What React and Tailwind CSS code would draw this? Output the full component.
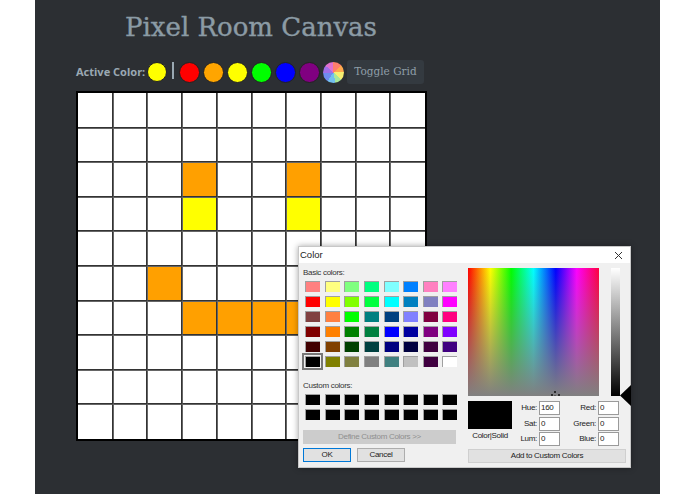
const sans = 'font-["Noto_Sans",sans-serif]';
const ui = 'font-["Liberation_Sans",Arial,sans-serif]';
const small = 'text-[8px] tracking-[-0.3px]';

const palette = [
  { name: 'red', cls: 'bg-[#ff0000]' },
  { name: 'orange', cls: 'bg-[#ffa500]' },
  { name: 'yellow', cls: 'bg-[#ffff00]' },
  { name: 'green', cls: 'bg-[#00ff00]' },
  { name: 'blue', cls: 'bg-[#0000ff]' },
  { name: 'purple', cls: 'bg-[#800080]' },
];

const painted = {
  '2-3': 'bg-[#ffa000]',
  '2-6': 'bg-[#ffa000]',
  '3-3': 'bg-[#ffff00]',
  '3-6': 'bg-[#ffff00]',
  '5-2': 'bg-[#ffa000]',
  '6-3': 'bg-[#ffa000]',
  '6-4': 'bg-[#ffa000]',
  '6-5': 'bg-[#ffa000]',
  '6-6': 'bg-[#ffa000]',
};

const basicColors = [
  '#ff8080', '#ffff80', '#80ff80', '#00ff80', '#80ffff', '#0080ff', '#ff80c0', '#ff80ff',
  '#ff0000', '#ffff00', '#80ff00', '#00ff40', '#00ffff', '#0080c0', '#8080c0', '#ff00ff',
  '#804040', '#ff8040', '#00ff00', '#008080', '#004080', '#8080ff', '#800040', '#ff0080',
  '#800000', '#ff8000', '#008000', '#008040', '#0000ff', '#0000a0', '#800080', '#8000ff',
  '#400000', '#804000', '#004000', '#004040', '#000080', '#000040', '#400040', '#400080',
  '#000000', '#808000', '#808040', '#808080', '#408080', '#c0c0c0', '#400040', '#ffffff',
];

function Swatch({ color, selected }) {
  return (
    <div className={`w-[15px] ${selected ? 'outline-2 outline-[#777] outline-offset-1' : ''}`}>
      <svg width="15" height="11" className="block border-t border-l border-[#a0a0a0]">
        <rect width="15" height="11" fill={color} />
      </svg>
    </div>
  );
}

function Field({ label, value }) {
  return (
    <div className="flex items-center justify-end gap-[2px]">
      <span className={`${small} shrink-0 text-[#222]`}>{label}</span>
      <div className={`${small} shrink-0 w-[21px] h-[14px] bg-white border border-[#9a9a9a] pl-[1px] leading-[12px] text-[#222]`}>
        {value}
      </div>
    </div>
  );
}

function ColorDialog() {
  return (
    <div className={`absolute left-[298px] top-[246px] w-[333px] h-[222px] bg-[#f0f0f0] border border-[#c8c8c8] shadow-[0_0_6px_rgba(0,0,0,0.35)] ${ui}`}>
      <div className="h-[16px] bg-white flex items-center justify-between pl-[1px] pr-[7px] text-[9.5px] text-[#222]">
        <span>Color</span>
        <svg width="9" height="9" viewBox="0 0 9 9" className="stroke-[#333]">
          <path d="M1 1l7 7M8 1l-7 7" strokeWidth="1" />
        </svg>
      </div>
      <div className="flex pl-[4px] pt-[5px] gap-[12px]">
        <div className="w-[153px]">
          <p className={`${small} leading-[10px] text-[#333]`}>Basic colors:</p>
          <div className="grid grid-cols-8 gap-y-[4px] pl-[2px] mt-[3px] w-[159px]">
            {basicColors.map((c, i) => (
              <Swatch key={i} color={c} selected={i === 40} />
            ))}
          </div>
          <p className={`${small} leading-[10px] text-[#333] mt-[14px]`}>Custom colors:</p>
          <div className="grid grid-cols-8 gap-y-[4px] pl-[2px] mt-[3px] w-[159px]">
            {Array.from({ length: 16 }, (_, i) => (
              <Swatch key={i} color="#000000" />
            ))}
          </div>
          <div className={`${small} mt-[10px] h-[14px] bg-[#cccccc] leading-[14px] text-center text-[#8f8f8f]`}>
            Define Custom Colors &gt;&gt;
          </div>
          <div className={`${small} flex gap-[6px] mt-[4px] leading-[12px] text-center text-[#222]`}>
            <div className="w-[48px] h-[14px] bg-[#e1e1e1] border border-[#0078d7]">OK</div>
            <div className="w-[48px] h-[14px] bg-[#e1e1e1] border border-[#adadad]">Cancel</div>
          </div>
        </div>
        <div className="w-[158px] relative">
          <div className="flex gap-[12px] items-start">
            <svg width="131" height="128" className="block">
              <defs>
                <linearGradient id="hue">
                  <stop offset="0" stopColor="#ff0000" />
                  <stop offset="0.17" stopColor="#ffff00" />
                  <stop offset="0.33" stopColor="#00ff00" />
                  <stop offset="0.5" stopColor="#00ffff" />
                  <stop offset="0.67" stopColor="#0000ff" />
                  <stop offset="0.83" stopColor="#ff00ff" />
                  <stop offset="1" stopColor="#ff0040" />
                </linearGradient>
                <linearGradient id="sat" x2="0" y2="1">
                  <stop offset="0" stopColor="#808080" stopOpacity="0" />
                  <stop offset="1" stopColor="#808080" stopOpacity="1" />
                </linearGradient>
                <linearGradient id="lum" x2="0" y2="1">
                  <stop offset="0" stopColor="#ffffff" />
                  <stop offset="1" stopColor="#000000" />
                </linearGradient>
              </defs>
              <rect width="131" height="128" fill="url(#hue)" />
              <rect width="131" height="128" fill="url(#sat)" />
              <path d="M87 123v2M87 127.5v.5M83 127h2M90 127h2" stroke="#111" strokeWidth="1.5" />
            </svg>
            <svg width="9" height="128" className="block">
              <rect width="9" height="128" fill="url(#lum)" />
            </svg>
          </div>
          <svg width="11" height="21" viewBox="0 0 11 21" className="absolute left-[152px] top-[117px]">
            <path d="M0 10.5L11 0v21z" fill="#000" />
          </svg>
          <div className="flex mt-[5px]">
            <div className="w-[60px]">
              <div className="w-[44px] h-[28px] bg-black" />
              <p className={`${small} leading-[10px] mt-[2px] w-[44px] text-center text-[#222] whitespace-nowrap`}>Color|Solid</p>
            </div>
            <div className="w-[32px] flex flex-col gap-[1.5px]">
              <Field label="Hue:" value="160" />
              <Field label="Sat:" value="0" />
              <Field label="Lum:" value="0" />
            </div>
            <div className="w-[59px] flex flex-col gap-[1.5px]">
              <Field label="Red:" value="0" />
              <Field label="Green:" value="0" />
              <Field label="Blue:" value="0" />
            </div>
          </div>
          <div className={`${small} mt-[3px] h-[14px] w-[158px] bg-[#e1e1e1] border border-[#cfcfcf] leading-[12px] text-center text-[#222]`}>
            Add to Custom Colors
          </div>
        </div>
      </div>
    </div>
  );
}

export default function App() {
  return (
    <div className="relative w-[695px] h-[494px] bg-white overflow-hidden">
      <div className="ml-[35px] w-[625px] h-[494px] bg-[#2c2f33] pl-[41px]">
        <h1 className="w-[350px] pt-[9px] text-center text-[26px] leading-[36px] text-[#8b9ba5] [-webkit-text-stroke:0.4px_#8b9ba5] font-['DejaVu_Serif',serif]">
          Pixel Room Canvas
        </h1>
        <div className="flex items-center mt-[15px] h-[24px]">
          <span className={`text-[11px] font-bold text-[#9aa8b2] whitespace-nowrap w-[71px] ${sans}`}>Active Color:</span>
          <div className="w-[20px] h-[20px] rounded-full bg-[#ffff00] border border-[#222]" />
          <div className="w-[2px] h-[17px] bg-[#9aa8b2] ml-[5px] mr-[5px] -mt-[4px]" />
          <div className="flex gap-[3px]">
            {palette.map((p) => (
              <div key={p.name} className={`w-[21px] h-[21px] rounded-full border border-[#222] ${p.cls}`} />
            ))}
            <div className="w-[21px] h-[21px] rounded-full bg-[conic-gradient(#ff7f6b_0deg_45deg,#ffa94d_45deg_90deg,#f7ee70_90deg_135deg,#a8e89a_135deg_170deg,#72c0f0_170deg_215deg,#6f8cf0_215deg_265deg,#a070e8_265deg_310deg,#e070d0_310deg_360deg)]" />
          </div>
          <button className="ml-[3px] w-[77px] h-[24px] rounded-[3px] bg-[#343a40] text-[10.5px] text-[#8f9ea8] font-['DejaVu_Serif',serif]">
            Toggle Grid
          </button>
        </div>
        <div className="mt-[7px] w-[351px] h-[350px] border-2 border-black bg-white grid grid-cols-10 grid-rows-10">
          {Array.from({ length: 100 }, (_, i) => {
            const r = Math.floor(i / 10);
            const c = i % 10;
            return (
              <div
                key={i}
                className={`${painted[`${r}-${c}`] || 'bg-white'} ${c < 9 ? 'border-r border-r-[#333]' : ''} ${r < 9 ? 'border-b border-b-[#333]' : ''} ${c > 0 ? 'border-l border-l-[#666]' : ''} ${r > 0 ? 'border-t border-t-[#666]' : ''}`}
              />
            );
          })}
        </div>
      </div>
      <ColorDialog />
    </div>
  );
}
